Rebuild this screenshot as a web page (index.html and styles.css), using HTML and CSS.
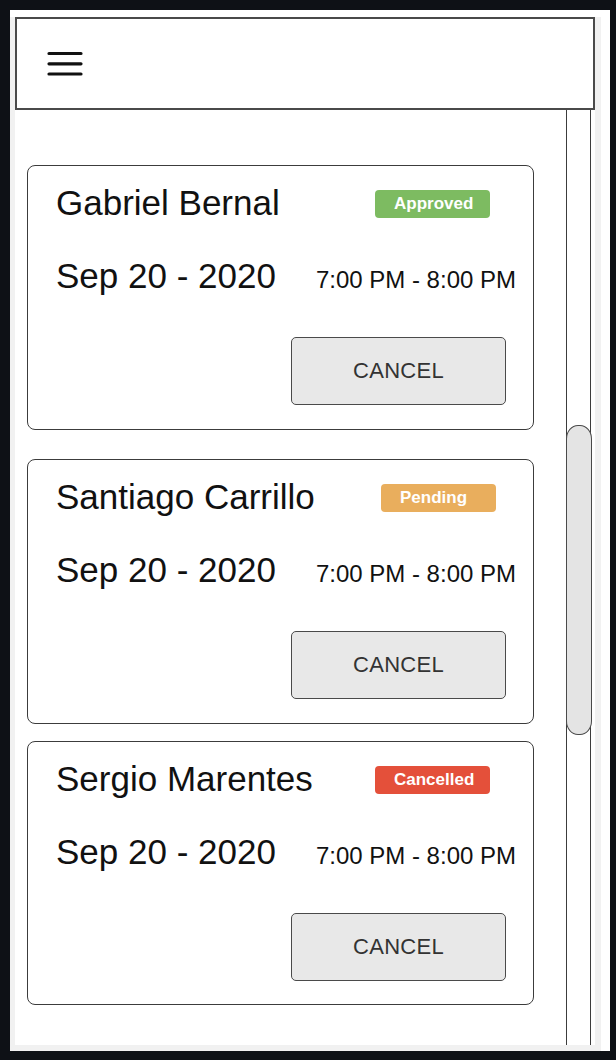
FILE: index.html
```html
<!DOCTYPE html>
<html lang="en">
<head>
    <meta charset="UTF-8">
    <meta name="viewport" content="width=device-width, initial-scale=1.0">
    <title>Appointments</title>
    <link rel="stylesheet" href="styles.css">
</head>
<body>
    <div class="frame">
        <div class="screen">
            <div class="app">
                <header class="topbar">
                    <svg class="menu-icon" width="36" height="26" viewBox="0 0 36 26">
                        <path d="M2 2.5H34M2 12.8H34M2 23H34" stroke="#111" stroke-width="3.2" stroke-linecap="round" fill="none"/>
                    </svg>
                </header>
                <div class="main">
                    <div class="list">
                        <div class="card">
                            <div class="card-head">
                                <span class="name">Gabriel Bernal</span>
                                <span class="badge approved">Approved</span>
                            </div>
                            <div class="card-when">
                                <span class="date">Sep 20 - 2020</span>
                                <span class="time">7:00 PM - 8:00 PM</span>
                            </div>
                            <div class="card-actions">
                                <button type="button" class="cancel-btn">CANCEL</button>
                            </div>
                        </div>

                        <div class="card">
                            <div class="card-head">
                                <span class="name">Santiago Carrillo</span>
                                <span class="badge pending">Pending</span>
                            </div>
                            <div class="card-when">
                                <span class="date">Sep 20 - 2020</span>
                                <span class="time">7:00 PM - 8:00 PM</span>
                            </div>
                            <div class="card-actions">
                                <button type="button" class="cancel-btn">CANCEL</button>
                            </div>
                        </div>

                        <div class="card">
                            <div class="card-head">
                                <span class="name">Sergio Marentes</span>
                                <span class="badge cancelled">Cancelled</span>
                            </div>
                            <div class="card-when">
                                <span class="date">Sep 20 - 2020</span>
                                <span class="time">7:00 PM - 8:00 PM</span>
                            </div>
                            <div class="card-actions">
                                <button type="button" class="cancel-btn">CANCEL</button>
                            </div>
                        </div>
                    </div>
                    <div class="scroll-track">
                        <div class="scroll-thumb"></div>
                    </div>
                </div>
            </div>
        </div>
    </div>
</body>
</html>
```

FILE: styles.css
```css
* {
    box-sizing: border-box;
}
body {
    margin: 0;
    background-color: #0e1116;
    font-family: "Liberation Sans", Arial, sans-serif;
    color: #111;
}
.frame {
    margin: 10px;
    width: 600px;
    height: 1041px;
    background-color: #fff;
    padding: 7px 9px 0 0;
}
.screen {
    height: 1034px;
    background-color: #f1f1f1;
    padding: 0 6px 6px 5px;
}
.app {
    height: 100%;
    background-color: #fff;
    display: flex;
    flex-direction: column;
}
.topbar {
    height: 93px;
    border: 2px solid #4a4a4a;
    display: flex;
    align-items: center;
    padding-left: 30px;
}
.menu-icon {
    display: block;
    margin-top: 1px;
}
.main {
    flex: 1;
    display: flex;
}
.list {
    flex: 1;
    padding: 55px 32px 0 12px;
}
.card {
    height: 265px;
    border: 1.5px solid #3c3c3c;
    border-radius: 8px;
    padding: 17px 17px 0 28px;
}
.card + .card {
    margin-top: 29px;
}
.card:last-child {
    margin-top: 17px;
    height: 264px;
}
.card-head {
    display: flex;
    justify-content: space-between;
    align-items: center;
    height: 40px;
}
.name {
    font-size: 35px;
    line-height: 40px;
}
.badge {
    width: 115px;
    height: 28px;
    border-radius: 4px;
    color: #fff;
    font-weight: bold;
    font-size: 17px;
    line-height: 28px;
    padding-left: 19px;
    margin-right: 26px;
    margin-top: 2px;
}
.badge.approved {
    background-color: #7dbb61;
}
.badge.pending {
    background-color: #e9ae5d;
    margin-right: 20px;
}
.badge.cancelled {
    background-color: #e4503a;
}
.card-when {
    display: flex;
    justify-content: space-between;
    align-items: baseline;
    margin-top: 33px;
    height: 40px;
}
.date {
    font-size: 35px;
    line-height: 40px;
}
.time {
    font-size: 24px;
}
.card-actions {
    display: flex;
    justify-content: flex-end;
    margin-top: 41px;
}
.cancel-btn {
    width: 215px;
    height: 68px;
    margin-right: 10px;
    background-color: #e8e8e8;
    border: 1.5px solid #4a4a4a;
    border-radius: 5px;
    font-family: "Liberation Sans", Arial, sans-serif;
    font-size: 22px;
    color: #333;
    letter-spacing: 0.3px;
}
.scroll-track {
    width: 25px;
    margin-right: 4px;
    border-left: 1.5px solid #3c3c3c;
    border-right: 1.5px solid #3c3c3c;
}
.scroll-thumb {
    margin: 315px -1.5px 0;
    height: 310px;
    background-color: #e4e4e4;
    border: 1.5px solid #4a4a4a;
    border-radius: 12px / 14px;
}
```
